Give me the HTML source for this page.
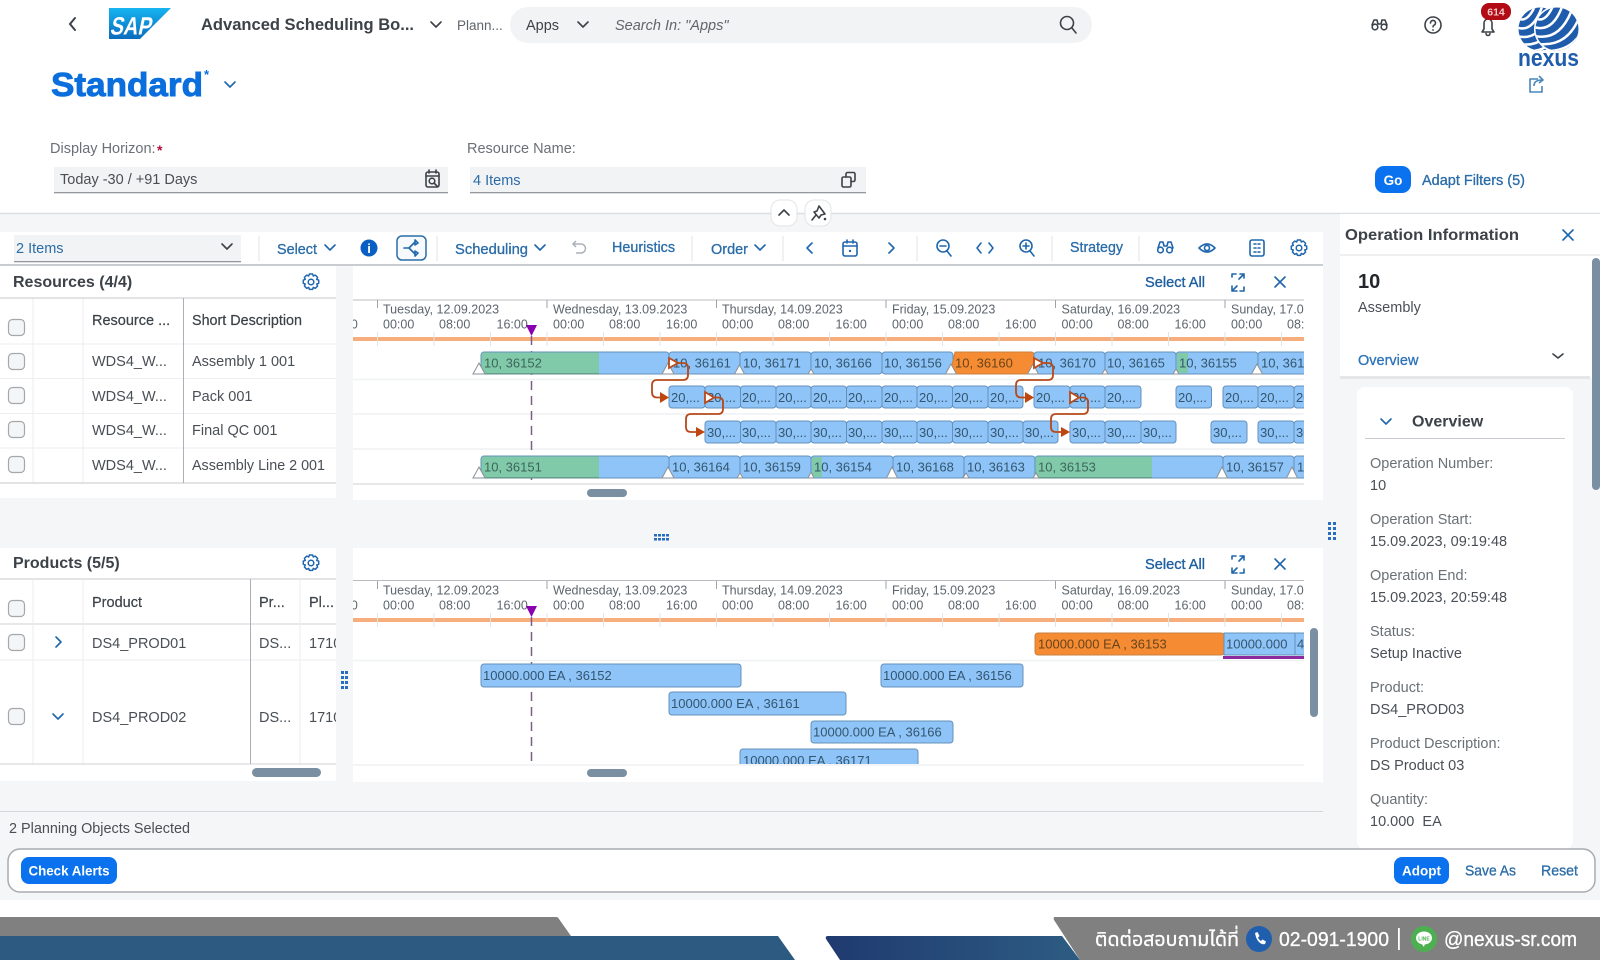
<!DOCTYPE html>
<html lang="en"><head><meta charset="utf-8"><title>Advanced Scheduling Board</title>
<style>
html,body{margin:0;padding:0;width:1600px;height:960px;overflow:hidden;background:#fff}
svg{display:block;filter:blur(.35px);font-family:"Liberation Sans","DejaVu Sans",sans-serif}
.t{font-size:14.5px;fill:#3c4248}
.g{font-size:14.5px;fill:#6a7076}
.v{font-size:14.5px;fill:#4a4f55}
.l{font-size:14.5px;fill:#2a6ca8}
.m{font-size:14.5px;fill:#2a6ca8;stroke:#2a6ca8;stroke-width:.3}
.lb{font-size:14.5px;fill:#1f5f9f;stroke:#1f5f9f;stroke-width:.35}
.h{font-size:16px;font-weight:bold;fill:#3c4248}
.d{font-size:12.5px;fill:#5d656c}
.b{fill:#8fc4f8;stroke:#6391bb;stroke-width:1}
.gr{fill:#80c9a9}
.bt{font-size:13px;fill:#33566f}
.bg{font-size:13px;fill:#3d665a}
.bo{font-size:13px;fill:#6a4318}
.wh{font-size:13.5px;fill:#fff;font-weight:bold}
.cb{fill:#f4f5f6;stroke:#a4a8ac;stroke-width:1.2}
.ic{fill:none;stroke:#1f66ad;stroke-width:1.6;stroke-linecap:round;stroke-linejoin:round}
.ik{fill:none;stroke:#3c4248;stroke-width:1.6;stroke-linecap:round;stroke-linejoin:round}
.tr{fill:#fff;stroke:#8a9096;stroke-width:1}
.sep{stroke:#e2e4e6;stroke-width:1}
.ar{fill:none;stroke:#b8491a;stroke-width:1.8}
.ah{fill:#c0460f}
.as{fill:#fff;stroke:#b8491a;stroke-width:1.8}
.ft{font-size:20px;fill:#fff;stroke:#fff;stroke-width:.3}
</style></head><body>
<svg width="1600" height="960" viewBox="0 0 1600 960" xmlns="http://www.w3.org/2000/svg">
<defs>
<clipPath id="c1"><rect x="353" y="296" width="951" height="190"/></clipPath>
<clipPath id="c2"><rect x="353" y="577" width="951" height="187"/></clipPath>
<clipPath id="c3"><rect x="0" y="579" width="336" height="186"/></clipPath>
<clipPath id="gc1"><circle cx="1540" cy="29" r="21.5"/></clipPath>
<clipPath id="gc2"><circle cx="1557" cy="29" r="21.5"/></clipPath>
<linearGradient id="sap" x1="0" y1="0" x2="0" y2="1"><stop offset="0" stop-color="#16b4f0"/><stop offset="1" stop-color="#0a6cbd"/></linearGradient>
<linearGradient id="nv" x1="0" y1="0" x2="1" y2="0"><stop offset="0" stop-color="#1f3a70"/><stop offset="1" stop-color="#2d5c82"/></linearGradient>
<symbol id="gear" viewBox="-9 -9 18 18" overflow="visible"><path d="M-1.6-8h3.2l.7 2 2-.9 2.3 2.3-.9 2 2 .7v3.2l-2 .7.9 2-2.3 2.3-2-.9-.7 2h-3.2l-.7-2-2 .9-2.3-2.3.9-2-2-.7v-3.2l2-.7-.9-2 2.3-2.3 2 .9z" fill="none" stroke="#1f66ad" stroke-width="1.5" stroke-linejoin="round"/><circle r="2.8" fill="none" stroke="#1f66ad" stroke-width="1.5"/></symbol>
</defs>

<!-- backgrounds -->
<rect x="0" y="214" width="1600" height="686" fill="#f5f6f7"/>
<line x1="0" y1="213.500" x2="1600" y2="213.500" stroke="#dcdfe1" stroke-width="1.500"/>
<rect x="0" y="232" width="1323" height="33" fill="#fff"/>
<rect x="0" y="264" width="1323" height="2" fill="#c9cdd1"/>
<rect x="0" y="266" width="336" height="232" fill="#fff"/>
<rect x="353" y="266" width="970" height="234" fill="#fff"/>
<rect x="0" y="548" width="336" height="233" fill="#fff"/>
<rect x="353" y="548" width="970" height="234" fill="#fff"/>
<rect x="1340" y="214" width="260" height="164" fill="#fff"/>
<rect x="1340" y="376" width="250" height="3" fill="#e4e6e8"/>
<rect x="1357" y="387" width="216" height="462" rx="8" fill="#fff"/>

<!-- shell bar -->
<path d="M75 18l-5 6 5 6" fill="none" stroke="#3c4248" stroke-width="2" stroke-linecap="round"/>
<path d="M109 8H171L140 39H109Z" fill="url(#sap)"/>
<text transform="translate(109.500 34.500) skewX(-12)" x="0" y="0" font-size="25" font-weight="bold" fill="#fff" textLength="41" lengthAdjust="spacingAndGlyphs">SAP</text>
<text x="201" y="30" font-size="17" font-weight="bold" fill="#3c4248" textLength="213" lengthAdjust="spacingAndGlyphs">Advanced Scheduling Bo...</text>
<path d="M431 22l5 5 5-5" class="ik" stroke-width="2"/>
<text x="457" y="30" font-size="13.5" fill="#5f656b">Plann...</text>
<rect x="510" y="7" width="582" height="36" rx="18" fill="#f2f3f4"/>
<text x="526" y="30" class="t" fill="#4a4f55">Apps</text>
<path d="M578 22l5 5 5-5" class="ik" stroke-width="2"/>
<text x="615" y="30" font-size="14.5" font-style="italic" fill="#5f656b">Search In: "Apps"</text>
<circle cx="1067" cy="23" r="6.500" class="ik"/><path d="M1072 28l4 5" class="ik"/>
<g class="ik" stroke-width="2"><circle cx="1375" cy="27" r="2.800"/><circle cx="1384" cy="27" r="2.800"/><path d="M1372 25l2-5h3l1 4h3l1-4h3l2 5"/></g>
<circle cx="1433" cy="25" r="8" class="ik"/><path d="M1430.500 23a2.500 2.500 0 1 1 3.500 2.200c-.7.4-1 .9-1 1.600" class="ik" stroke-width="1.400"/><circle cx="1433" cy="30" r=".9" fill="#3c4248"/>
<path d="M1482 32h12l-2-3v-6a4 4 0 0 0-8 0v6zM1486 33.500a2 2 0 0 0 4 0" class="ik"/>
<rect x="1481" y="3" width="30" height="17" rx="8" fill="#b30b15"/>
<text x="1496" y="15.500" font-size="10.500" font-weight="bold" fill="#f3c9cc" text-anchor="middle">614</text>

<!-- nexus logo -->
<circle cx="1540" cy="29" r="21.500" fill="#1f5cab"/>
<g clip-path="url(#gc1)" fill="none" stroke="#fff" stroke-width="2.500"><path d="M1517 18q10 6 18-12"/><path d="M1516 27q16 7 26-20"/><path d="M1517 36q22 6 33-24"/><path d="M1521 44q24 4 35-24"/><path d="M1530 51q20 0 30-20"/></g>
<circle cx="1557" cy="29" r="23" fill="#fff"/>
<circle cx="1557" cy="29" r="21.500" fill="#1f5cab"/>
<g clip-path="url(#gc2)" fill="none" stroke="#fff" stroke-width="2.500"><path d="M1535 18q10 6 18-12"/><path d="M1534 27q18 6 28-20"/><path d="M1535 36q24 5 36-24"/><path d="M1539 44q28 3 40-26"/><path d="M1550 51q22-1 32-20"/></g>
<text x="1518" y="66" font-size="24" font-weight="bold" fill="#1f5cab" textLength="61" lengthAdjust="spacingAndGlyphs">nexus</text>
<path d="M1538 79h-8v13h12v-6M1534 86c0-4 3-6 8-6M1539 76l4 4-4 3" fill="none" stroke="#4a86b8" stroke-width="1.600" stroke-linejoin="round"/>

<!-- title & filters -->
<text x="51" y="96" font-size="33" font-weight="bold" fill="#0a6fdc" stroke="#0a6fdc" stroke-width=".9" textLength="152" lengthAdjust="spacingAndGlyphs">Standard</text>
<text x="204" y="79" font-size="13" font-weight="bold" fill="#0a6fdc">*</text>
<path d="M225 82l5 5 5-5" class="ic"/>
<text x="50" y="153" class="g">Display Horizon:</text>
<text x="157" y="155" font-size="14" font-weight="bold" fill="#b0103a">*</text>
<text x="467" y="153" class="g">Resource Name:</text>
<rect x="54" y="167" width="394" height="25" fill="#f2f3f4"/><rect x="54" y="192" width="394" height="1.300" fill="#94989c"/>
<text x="60" y="184" class="v">Today -30 / +91 Days</text>
<g class="ik" stroke-width="1.400"><rect x="426" y="172" width="13" height="15" rx="2"/><path d="M426 176h13M429 170v3M436 170v3"/><circle cx="432" cy="181" r="2.800"/><path d="M434 183l3 3"/></g>
<rect x="470" y="167" width="396" height="25" fill="#f2f3f4"/><rect x="470" y="192" width="396" height="1.300" fill="#94989c"/>
<text x="473" y="185" class="l">4 Items</text>
<g class="ik" stroke-width="1.400"><rect x="842" y="177" width="9" height="10" rx="1.500"/><path d="M846 177v-3a1.500 1.500 0 0 1 1.500-1.500h6a1.500 1.500 0 0 1 1.500 1.500v6a1.500 1.500 0 0 1-1.500 1.500h-2.500"/></g>
<rect x="1375" y="166" width="36" height="27" rx="9" fill="#0a72ee"/>
<text x="1393" y="185" class="wh" text-anchor="middle" font-size="14.500">Go</text>
<text x="1422" y="185" class="m" textLength="103" lengthAdjust="spacingAndGlyphs">Adapt Filters (5)</text>

<rect x="771" y="200" width="26" height="26" rx="9" fill="#fff" stroke="#e2e4e6"/>
<path d="M779 215l5-5 5 5" class="ik" stroke-width="1.900"/>
<rect x="805" y="200" width="26" height="26" rx="9" fill="#fff" stroke="#e2e4e6"/>
<path d="M819 206l6 8-4 1-2 3-5-6 3-1zM812 220l4-5" class="ik" stroke-width="1.300"/><circle cx="825" cy="219" r="1.300" fill="#3c4248"/>

<!-- toolbar -->
<rect x="14" y="235" width="227" height="27" fill="#f2f3f4"/><rect x="14" y="261" width="227" height="1.300" fill="#94989c"/>
<text x="16" y="253" class="l">2 Items</text>
<path d="M222 244l5 5 5-5" class="ik" stroke-width="2"/>
<g class="sep"><line x1="259" y1="236" x2="259" y2="261"/><line x1="437" y1="236" x2="437" y2="261"/><line x1="692" y1="236" x2="692" y2="261"/><line x1="783" y1="236" x2="783" y2="261"/><line x1="917" y1="236" x2="917" y2="261"/><line x1="1052" y1="236" x2="1052" y2="261"/><line x1="1139" y1="236" x2="1139" y2="261"/></g>
<text x="277" y="254" class="m" textLength="40" lengthAdjust="spacingAndGlyphs">Select</text>
<path d="M325 245l5 5 5-5" class="ic"/>
<circle cx="369" cy="248" r="8.500" fill="#0a5fc4"/><text x="369" y="253" font-size="13" font-weight="bold" fill="#fff" text-anchor="middle">i</text>
<rect x="397" y="236" width="29" height="24" rx="5" fill="#f7fafd" stroke="#2a6ca8" stroke-width="1.500"/>
<path d="M404 248h5l6-6M409 248l6 6M415 240v5l3-2zM415 256v-5l3 2z" class="ic"/>
<text x="455" y="254" class="m" textLength="73" lengthAdjust="spacingAndGlyphs">Scheduling</text>
<path d="M535 245l5 5 5-5" class="ic"/>
<path d="M573 244h8a4 4 0 0 1 0 9h-5M576 241l-3 3 3 3" fill="none" stroke="#aab2b8" stroke-width="1.500"/>
<text x="612" y="252" class="m" textLength="63" lengthAdjust="spacingAndGlyphs">Heuristics</text>
<text x="711" y="254" class="m" textLength="37" lengthAdjust="spacingAndGlyphs">Order</text>
<path d="M755 245l5 5 5-5" class="ic"/>
<path d="M812 243l-5 5 5 5" class="ic"/>
<g class="ic"><rect x="843" y="242" width="14" height="14" rx="2"/><path d="M843 246h14M847 240v3M853 240v3"/></g><circle cx="850" cy="251" r="1.200" fill="#1f66ad"/>
<path d="M889 243l5 5-5 5" class="ic"/>
<g class="ic"><circle cx="943" cy="246" r="6"/><path d="M947 251l4 5M940 246h6"/></g>
<path d="M981 243l-4 5 4 5M989 243l4 5-4 5" class="ic"/>
<g class="ic"><circle cx="1026" cy="246" r="6"/><path d="M1030 251l4 5M1023 246h6M1026 243v6"/></g>
<text x="1070" y="252" class="m" textLength="53" lengthAdjust="spacingAndGlyphs">Strategy</text>
<g class="ic" stroke-width="2"><circle cx="1160.500" cy="250" r="2.800"/><circle cx="1169.500" cy="250" r="2.800"/><path d="M1158 248l2-6h3l1 4h3l1-4h3l2 6"/></g>
<g class="ic"><path d="M1199 248q8-8 16 0-8 8-16 0z"/><circle cx="1207" cy="248" r="2.500"/></g>
<g class="ic"><rect x="1250" y="240" width="14" height="16" rx="2"/><path d="M1254 244h2M1258 244h2M1254 248h2M1258 248h2M1254 252h2M1258 252h2"/></g>
<use href="#gear" x="1290" y="239" width="18" height="18"/>

<!-- Resources table -->
<text x="13" y="287" class="h">Resources (4/4)</text>
<use href="#gear" x="302" y="273" width="18" height="18"/>
<g stroke="#eceef0" stroke-width="1"><line x1="0" y1="344" x2="336" y2="344"/><line x1="0" y1="378.500" x2="336" y2="378.500"/><line x1="0" y1="413.500" x2="336" y2="413.500"/><line x1="0" y1="448" x2="336" y2="448"/><line x1="33" y1="298" x2="33" y2="483"/><line x1="83" y1="298" x2="83" y2="483"/></g>
<line x1="0" y1="298" x2="336" y2="298" stroke="#cfd2d5" stroke-width="1.200"/><line x1="0" y1="483" x2="336" y2="483" stroke="#cfd2d5" stroke-width="1.200"/>
<line x1="183.500" y1="298" x2="183.500" y2="483" stroke="#aab0b5"/>
<rect class="cb" x="8.500" y="319.500" width="16" height="16" rx="4"/><rect class="cb" x="8.500" y="353.500" width="16" height="16" rx="4"/><rect class="cb" x="8.500" y="387.500" width="16" height="16" rx="4"/><rect class="cb" x="8.500" y="421.500" width="16" height="16" rx="4"/><rect class="cb" x="8.500" y="456.500" width="16" height="16" rx="4"/>
<text x="92" y="325" class="t" style="stroke:#3c4248;stroke-width:.2">Resource ...</text>
<text x="192" y="325" class="t" textLength="110" lengthAdjust="spacingAndGlyphs" style="stroke:#3c4248;stroke-width:.2">Short Description</text>
<text x="92" y="366" class="v">WDS4_W...</text><text x="192" y="366" class="v">Assembly 1 001</text>
<text x="92" y="401" class="v">WDS4_W...</text><text x="192" y="401" class="v">Pack 001</text>
<text x="92" y="435" class="v">WDS4_W...</text><text x="192" y="435" class="v">Final QC 001</text>
<text x="92" y="470" class="v">WDS4_W...</text><text x="192" y="470" class="v" textLength="133" lengthAdjust="spacingAndGlyphs">Assembly Line 2 001</text>

<!-- Top gantt -->
<text x="1145" y="287" class="lb" textLength="60" lengthAdjust="spacingAndGlyphs">Select All</text>
<path d="M1232 277v-3h4M1240 291h4v-4M1239 279l5-5M1244 278v-4h-4M1232 286v5h5M1232 291l5-5" class="ic"/>
<path d="M1275 277l10 10M1285 277l-10 10" class="ic" stroke-width="1.800"/>
<line x1="353" y1="300" x2="1304" y2="300" stroke="#b8bcc0"/>
<g clip-path="url(#c1)">
<g stroke="#9ea3a8"><path d="M377.500 300v8M547 300v8M716.500 300v8M886 300v8M1055.500 300v8M1225 300v8"/></g>
<g class="d">
<text x="326.500" y="328.500">16:00</text>
<text x="383" y="313.500">Tuesday, 12.09.2023</text><text x="383" y="328.500">00:00</text><text x="439" y="328.500">08:00</text><text x="496.500" y="328.500">16:00</text>
<text x="553" y="313.500">Wednesday, 13.09.2023</text><text x="553" y="328.500">00:00</text><text x="609" y="328.500">08:00</text><text x="666" y="328.500">16:00</text>
<text x="722" y="313.500">Thursday, 14.09.2023</text><text x="722" y="328.500">00:00</text><text x="778" y="328.500">08:00</text><text x="835.500" y="328.500">16:00</text>
<text x="892" y="313.500">Friday, 15.09.2023</text><text x="892" y="328.500">00:00</text><text x="948" y="328.500">08:00</text><text x="1005" y="328.500">16:00</text>
<text x="1061.500" y="313.500">Saturday, 16.09.2023</text><text x="1061.500" y="328.500">00:00</text><text x="1117.500" y="328.500">08:00</text><text x="1174.500" y="328.500">16:00</text>
<text x="1231" y="313.500">Sunday, 17.09.2023</text><text x="1231" y="328.500">00:00</text><text x="1287" y="328.500">08:00</text>
</g>
<rect x="353" y="337" width="951" height="4" fill="#f5ae7c"/>
<g stroke="#e2e4e6"><path d="M377.500 332v14M434 332v14M490.500 332v14M547 332v14M603.500 332v14M660 332v14M716.500 332v14M773 332v14M829.500 332v14M886 332v14M942.500 332v14M999 332v14M1055.500 332v14M1112 332v14M1168.500 332v14M1225 332v14M1281.500 332v14"/></g>
<g stroke="#eff1f2" stroke-width="1.500"><line x1="353" y1="379.500" x2="1304" y2="379.500"/><line x1="353" y1="414" x2="1304" y2="414"/><line x1="353" y1="449" x2="1304" y2="449"/></g>
<line x1="353" y1="484" x2="1304" y2="484" stroke="#dfe1e3" stroke-width="1.500"/>
<line x1="531.500" y1="336" x2="531.500" y2="482" stroke="#7a5f85" stroke-width="1.500" stroke-dasharray="9 6"/>
<path d="M526 325H537L531.500 336Z" fill="#8a00b0"/>

<!-- row 1 -->
<rect class="b" x="481" y="352" width="188" height="22" rx="3"/><path d="M484 352.500H599V373.500H484Q481.500 373.500 481.500 371V355Q481.500 352.500 484 352.500Z" class="gr"/><line x1="481.500" y1="373.800" x2="599" y2="373.800" stroke="#5d8f80"/>
<text x="484" y="367.500" class="bg">10, 36152</text>
<rect class="b" x="669" y="352" width="71" height="22" rx="3"/><text x="673" y="367.500" class="bt">10, 36161</text>
<rect class="b" x="740" y="352" width="71" height="22" rx="3"/><text x="743" y="367.500" class="bt">10, 36171</text>
<rect class="b" x="811" y="352" width="71" height="22" rx="3"/><text x="814" y="367.500" class="bt">10, 36166</text>
<rect class="b" x="882" y="352" width="71" height="22" rx="3"/><text x="884" y="367.500" class="bt">10, 36156</text>
<path d="M955 352H1031Q1034 352 1034 355V374H950Z" fill="#f58c34" stroke="#c9803f"/><text x="955" y="367.500" class="bo">10, 36160</text>
<rect class="b" x="1034" y="352" width="71" height="22" rx="3"/><text x="1038" y="367.500" class="bt">10, 36170</text>
<rect class="b" x="1105" y="352" width="71" height="22" rx="3"/><text x="1107" y="367.500" class="bt">10, 36165</text>
<rect class="b" x="1176" y="352" width="82" height="22" rx="3"/><rect class="gr" x="1177" y="353" width="11" height="20"/><text x="1179" y="367.500" class="bt">10, 36155</text>
<rect class="b" x="1258" y="352" width="60" height="22" rx="3"/><text x="1261" y="367.500" class="bt">10, 36157</text>
<!-- row 2 -->
<g class="b"><rect x="669" y="386" width="36" height="22" rx="3"/><rect x="705" y="386" width="35.500" height="22" rx="3"/><rect x="740.500" y="386" width="35.500" height="22" rx="3"/><rect x="776" y="386" width="35" height="22" rx="3"/><rect x="811" y="386" width="35.500" height="22" rx="3"/><rect x="846.500" y="386" width="35.500" height="22" rx="3"/><rect x="882" y="386" width="35" height="22" rx="3"/><rect x="917" y="386" width="35.500" height="22" rx="3"/><rect x="952.500" y="386" width="35.500" height="22" rx="3"/><rect x="988" y="386" width="35" height="22" rx="3"/><rect x="1034" y="386" width="36" height="22" rx="3"/><rect x="1070" y="386" width="35" height="22" rx="3"/><rect x="1105" y="386" width="36" height="22" rx="3"/><rect x="1176" y="386" width="35.500" height="22" rx="3"/><rect x="1223" y="386" width="35" height="22" rx="3"/><rect x="1258" y="386" width="36" height="22" rx="3"/><rect x="1294" y="386" width="20" height="22" rx="3"/></g>
<g class="bt"><text x="671" y="402">20,...</text><text x="707" y="402">20,...</text><text x="742" y="402">20,...</text><text x="778" y="402">20,...</text><text x="813" y="402">20,...</text><text x="848" y="402">20,...</text><text x="884" y="402">20,...</text><text x="919" y="402">20,...</text><text x="954" y="402">20,...</text><text x="990" y="402">20,...</text><text x="1036" y="402">20,...</text><text x="1072" y="402">20,...</text><text x="1107" y="402">20,...</text><text x="1178" y="402">20,...</text><text x="1225" y="402">20,...</text><text x="1260" y="402">20,...</text><text x="1296" y="402">20,...</text></g>
<!-- row 3 -->
<g class="b"><rect x="705" y="421" width="35.500" height="22" rx="3"/><rect x="740.500" y="421" width="35.500" height="22" rx="3"/><rect x="776" y="421" width="35" height="22" rx="3"/><rect x="811" y="421" width="35.500" height="22" rx="3"/><rect x="846.500" y="421" width="35.500" height="22" rx="3"/><rect x="882" y="421" width="35" height="22" rx="3"/><rect x="917" y="421" width="35.500" height="22" rx="3"/><rect x="952.500" y="421" width="35.500" height="22" rx="3"/><rect x="988" y="421" width="35" height="22" rx="3"/><rect x="1023" y="421" width="35" height="22" rx="3"/><rect x="1070" y="421" width="35" height="22" rx="3"/><rect x="1105" y="421" width="36" height="22" rx="3"/><rect x="1141" y="421" width="35" height="22" rx="3"/><rect x="1211" y="421" width="36" height="22" rx="3"/><rect x="1258" y="421" width="36" height="22" rx="3"/><rect x="1294" y="421" width="20" height="22" rx="3"/></g>
<g class="bt"><text x="707" y="437">30,...</text><text x="742" y="437">30,...</text><text x="778" y="437">30,...</text><text x="813" y="437">30,...</text><text x="848" y="437">30,...</text><text x="884" y="437">30,...</text><text x="919" y="437">30,...</text><text x="954" y="437">30,...</text><text x="990" y="437">30,...</text><text x="1025" y="437">30,...</text><text x="1072" y="437">30,...</text><text x="1107" y="437">30,...</text><text x="1143" y="437">30,...</text><text x="1213" y="437">30,...</text><text x="1260" y="437">30,...</text><text x="1296" y="437">30,...</text></g>
<!-- row 4 -->
<rect class="b" x="481" y="456" width="188" height="22" rx="3"/><path d="M484 456.500H599V477.500H484Q481.500 477.500 481.500 475V459Q481.500 456.500 484 456.500Z" class="gr"/><line x1="481.500" y1="477.800" x2="599" y2="477.800" stroke="#5d8f80"/>
<text x="484" y="471.500" class="bg">10, 36151</text>
<rect class="b" x="669" y="456" width="71" height="22" rx="3"/><text x="672" y="471.500" class="bt">10, 36164</text>
<rect class="b" x="740" y="456" width="71" height="22" rx="3"/><text x="743" y="471.500" class="bt">10, 36159</text>
<rect class="b" x="811" y="456" width="82" height="22" rx="3"/><rect class="gr" x="812" y="457" width="10" height="20"/><text x="814" y="471.500" class="bt">10, 36154</text>
<rect class="b" x="893" y="456" width="71" height="22" rx="3"/><text x="896" y="471.500" class="bt">10, 36168</text>
<rect class="b" x="964" y="456" width="71" height="22" rx="3"/><text x="967" y="471.500" class="bt">10, 36163</text>
<rect class="b" x="1035" y="456" width="188" height="22" rx="3"/><path d="M1037 456.500H1152V477.500H1037Q1035.500 477.500 1035.500 475V459Q1035.500 456.500 1037 456.500Z" class="gr"/><line x1="1035.500" y1="477.800" x2="1152" y2="477.800" stroke="#5d8f80"/>
<text x="1038" y="471.500" class="bg">10, 36153</text>
<rect class="b" x="1223" y="456" width="71" height="22" rx="3"/><text x="1226" y="471.500" class="bt">10, 36157</text>
<rect class="b" x="1294" y="456" width="20" height="22" rx="3"/><text x="1297" y="471.500" class="bt">10, 36158</text>
<!-- milestones -->
<g class="tr"><path d="M479 363l6 11h-12z"/><path d="M668 363l6 11h-12z"/><path d="M739.500 365l5 9h-10z"/><path d="M811 369l3 5h-6z"/><path d="M951 364l5.500 10h-11z"/><path d="M1033 364l5.500 10h-11z"/><path d="M1105 369l3 5h-6z"/><path d="M1176 369l3 5h-6z"/><path d="M1257 364l5.500 10h-11z"/>
<path d="M479 467l6 11h-12z"/><path d="M668 467l6 11h-12z"/><path d="M740 473l3 5h-6z"/><path d="M811 472l3 6h-6z"/><path d="M892 467l5.500 11h-11z"/><path d="M966 473l3 5h-6z"/><path d="M1036 473l3 5h-6z"/><path d="M1222 467l5.500 11h-11z"/><path d="M1292 467l5.500 11h-11z"/></g>
<!-- arrows -->
<path class="ar" d="M676 363H683Q688 363 688 368V375Q688 380 683 380H657Q652 380 652 385V392Q652 397.500 657 397.500H661"/>
<path class="ah" d="M660 392L669 397.500L660 403Z"/><path class="as" d="M669 358L678 363L669 368Z"/>
<path class="ar" d="M714 397.500H718Q723 397.500 723 402V409Q723 414 718 414H691Q686 414 686 419V427Q686 432 691 432H697"/>
<path class="ah" d="M696 427L705 432L696 437Z"/><path class="as" d="M705 392L714 397.500L705 403Z"/>
<path class="ar" d="M1043 363H1048Q1053 363 1053 368V375Q1053 380 1048 380H1021Q1016 380 1016 385V392Q1016 397.500 1021 397.500H1026"/>
<path class="ah" d="M1025 392L1034 397.500L1025 403Z"/><path class="as" d="M1034 358L1043 363L1034 368Z"/>
<path class="ar" d="M1079 397.500H1083Q1088 397.500 1088 402V409Q1088 414 1083 414H1056Q1051 414 1051 419V427Q1051 432 1056 432H1062"/>
<path class="ah" d="M1061 427L1070 432L1061 437Z"/><path class="as" d="M1070 392L1079 397.500L1070 403Z"/>
</g>
<rect x="587" y="489" width="40" height="8" rx="4" fill="#7b8fa3"/>

<!-- resizers -->
<g fill="#2a6cc0"><rect x="654" y="534" width="3" height="2.500"/><rect x="658" y="534" width="3" height="2.500"/><rect x="662" y="534" width="3" height="2.500"/><rect x="666" y="534" width="3" height="2.500"/><rect x="654" y="538" width="3" height="2.500"/><rect x="658" y="538" width="3" height="2.500"/><rect x="662" y="538" width="3" height="2.500"/><rect x="666" y="538" width="3" height="2.500"/>
<rect x="1328" y="522" width="3" height="3"/><rect x="1333" y="522" width="3" height="3"/><rect x="1328" y="527" width="3" height="3"/><rect x="1333" y="527" width="3" height="3"/><rect x="1328" y="532" width="3" height="3"/><rect x="1333" y="532" width="3" height="3"/><rect x="1328" y="537" width="3" height="3"/><rect x="1333" y="537" width="3" height="3"/>
<rect x="341" y="671" width="3" height="3"/><rect x="345" y="671" width="3" height="3"/><rect x="341" y="676" width="3" height="3"/><rect x="345" y="676" width="3" height="3"/><rect x="341" y="681" width="3" height="3"/><rect x="345" y="681" width="3" height="3"/><rect x="341" y="686" width="3" height="3"/><rect x="345" y="686" width="3" height="3"/></g>

<!-- Products table -->
<text x="13" y="568" class="h">Products (5/5)</text>
<use href="#gear" x="302" y="554" width="18" height="18"/>
<line x1="0" y1="579" x2="336" y2="579" stroke="#cfd2d5" stroke-width="1.200"/>
<g stroke="#eceef0"><line x1="0" y1="624" x2="336" y2="624" stroke="#d6d9dc" stroke-width="1.200"/><line x1="0" y1="660" x2="336" y2="660"/><line x1="33" y1="579" x2="33" y2="764"/><line x1="83" y1="579" x2="83" y2="764"/><line x1="300" y1="579" x2="300" y2="764"/></g>
<line x1="0" y1="764" x2="336" y2="764" stroke="#d6d9dc" stroke-width="1.200"/>
<line x1="250.500" y1="579" x2="250.500" y2="764" stroke="#aab0b5"/>
<rect class="cb" x="8.500" y="600.500" width="16" height="16" rx="4"/><rect class="cb" x="8.500" y="634.500" width="16" height="16" rx="4"/><rect class="cb" x="8.500" y="708.500" width="16" height="16" rx="4"/>
<text x="92" y="607" class="t" style="stroke:#3c4248;stroke-width:.2">Product</text>
<text x="259" y="607" class="t" style="stroke:#3c4248;stroke-width:.2">Pr...</text>
<text x="309" y="607" class="t" style="stroke:#3c4248;stroke-width:.2">Pl...</text>
<path d="M56 637l5 5-5 5" class="ic" stroke-width="2"/>
<path d="M53 714l5 5 5-5" class="ic" stroke-width="2"/>
<g clip-path="url(#c3)">
<text x="92" y="648" class="v">DS4_PROD01</text><text x="259" y="648" class="v">DS...</text><text x="309" y="648" class="v">1710</text>
<text x="92" y="722" class="v">DS4_PROD02</text><text x="259" y="722" class="v">DS...</text><text x="309" y="722" class="v">1710</text>
</g>
<rect x="252" y="768" width="69" height="9" rx="4.500" fill="#7b8fa3"/>

<!-- Bottom gantt -->
<text x="1145" y="569" class="lb" textLength="60" lengthAdjust="spacingAndGlyphs">Select All</text>
<path d="M1232 559v-3h4M1240 573h4v-4M1239 561l5-5M1244 560v-4h-4M1232 568v5h5M1232 573l5-5" class="ic"/>
<path d="M1275 559l10 10M1285 559l-10 10" class="ic" stroke-width="1.800"/>
<line x1="353" y1="580.500" x2="1304" y2="580.500" stroke="#b8bcc0"/>
<g clip-path="url(#c2)">
<g stroke="#9ea3a8"><path d="M377.500 581v8M547 581v8M716.500 581v8M886 581v8M1055.500 581v8M1225 581v8"/></g>
<g class="d">
<text x="326.500" y="609.500">16:00</text>
<text x="383" y="594.500">Tuesday, 12.09.2023</text><text x="383" y="609.500">00:00</text><text x="439" y="609.500">08:00</text><text x="496.500" y="609.500">16:00</text>
<text x="553" y="594.500">Wednesday, 13.09.2023</text><text x="553" y="609.500">00:00</text><text x="609" y="609.500">08:00</text><text x="666" y="609.500">16:00</text>
<text x="722" y="594.500">Thursday, 14.09.2023</text><text x="722" y="609.500">00:00</text><text x="778" y="609.500">08:00</text><text x="835.500" y="609.500">16:00</text>
<text x="892" y="594.500">Friday, 15.09.2023</text><text x="892" y="609.500">00:00</text><text x="948" y="609.500">08:00</text><text x="1005" y="609.500">16:00</text>
<text x="1061.500" y="594.500">Saturday, 16.09.2023</text><text x="1061.500" y="609.500">00:00</text><text x="1117.500" y="609.500">08:00</text><text x="1174.500" y="609.500">16:00</text>
<text x="1231" y="594.500">Sunday, 17.09.2023</text><text x="1231" y="609.500">00:00</text><text x="1287" y="609.500">08:00</text>
</g>
<rect x="353" y="618" width="951" height="4" fill="#f5ae7c"/>
<g stroke="#e2e4e6"><path d="M377.500 613v14M434 613v14M490.500 613v14M547 613v14M603.500 613v14M660 613v14M716.500 613v14M773 613v14M829.500 613v14M886 613v14M942.500 613v14M999 613v14M1055.500 613v14M1112 613v14M1168.500 613v14M1225 613v14M1281.500 613v14"/></g>
<line x1="353" y1="660.500" x2="1304" y2="660.500" stroke="#eff1f2" stroke-width="1.500"/>
<line x1="531.500" y1="617" x2="531.500" y2="764" stroke="#7a5f85" stroke-width="1.500" stroke-dasharray="9 6"/>
<path d="M526 606H537L531.500 617Z" fill="#8a00b0"/>
<rect x="1035" y="633" width="189" height="22" rx="3" fill="#f58c34" stroke="#c9803f"/><text x="1038" y="648.500" class="bo">10000.000 EA , 36153</text>
<rect class="b" x="1224" y="633" width="71" height="22"/><text x="1226" y="648.500" class="bt">10000.000</text>
<rect class="b" x="1295" y="633" width="25" height="22"/><text x="1297" y="648.500" class="bt">4</text>
<rect x="1223" y="656" width="81" height="3" fill="#8e2aa0"/>
<rect class="b" x="481" y="664" width="260" height="23" rx="3"/><text x="483" y="680" class="bt">10000.000 EA , 36152</text>
<rect class="b" x="881" y="664" width="142" height="23" rx="3"/><text x="883" y="680" class="bt">10000.000 EA , 36156</text>
<rect class="b" x="669" y="692" width="177" height="23" rx="3"/><text x="671" y="708" class="bt">10000.000 EA , 36161</text>
<rect class="b" x="811" y="721" width="142" height="22" rx="3"/><text x="813" y="736.500" class="bt">10000.000 EA , 36166</text>
<rect class="b" x="740" y="749" width="178" height="24" rx="3"/><text x="743" y="765" class="bt">10000.000 EA , 36171</text>
</g>
<line x1="353" y1="765" x2="1304" y2="765" stroke="#eceef0" stroke-width="1.200"/>
<rect x="587" y="769" width="40" height="8" rx="4" fill="#7b8fa3"/>
<rect x="1310" y="628" width="8" height="89" rx="4" fill="#7b8fa3"/>

<!-- Right panel -->
<text x="1345" y="240" class="h" textLength="174" lengthAdjust="spacingAndGlyphs">Operation Information</text>
<path d="M1563 230l10 10M1573 230l-10 10" class="ic" stroke-width="1.800"/>
<line x1="1340" y1="255" x2="1600" y2="255" stroke="#dfe1e3"/>
<rect x="1592" y="258" width="8" height="232" rx="4" fill="#7b8fa3"/>
<text x="1358" y="288" font-size="20" font-weight="bold" fill="#24282c">10</text>
<text x="1358" y="312" class="v">Assembly</text>
<text x="1358" y="365" class="m" style="fill:#2d73b8;stroke:#2d73b8">Overview</text>
<path d="M1553 354l5 4 5-4" class="ik" stroke-width="2"/>
<path d="M1381 419l5 5 5-5" class="ic" stroke-width="1.800"/>
<text x="1412" y="426.500" class="h">Overview</text>
<line x1="1365" y1="438.500" x2="1565" y2="438.500" stroke="#c9cdd1"/>
<text x="1370" y="468" class="g">Operation Number:</text><text x="1370" y="490" class="v">10</text>
<text x="1370" y="524" class="g">Operation Start:</text><text x="1370" y="546" class="v">15.09.2023, 09:19:48</text>
<text x="1370" y="580" class="g">Operation End:</text><text x="1370" y="602" class="v">15.09.2023, 20:59:48</text>
<text x="1370" y="636" class="g">Status:</text><text x="1370" y="658" class="v">Setup Inactive</text>
<text x="1370" y="692" class="g">Product:</text><text x="1370" y="714" class="v">DS4_PROD03</text>
<text x="1370" y="748" class="g">Product Description:</text><text x="1370" y="770" class="v">DS Product 03</text>
<text x="1370" y="804" class="g">Quantity:</text><text x="1370" y="826" class="v">10.000&#160; EA</text>

<!-- status + footer -->
<line x1="0" y1="811.500" x2="1323" y2="811.500" stroke="#d4d7da"/>
<text x="9" y="833" class="v" textLength="181" lengthAdjust="spacingAndGlyphs">2 Planning Objects Selected</text>
<rect x="8" y="849" width="1587" height="43" rx="12" fill="#fff" stroke="#a8acb0" stroke-width="1.500"/>
<rect x="21" y="857" width="96" height="27" rx="8" fill="#0a72ee"/>
<text x="69" y="875.500" class="wh" text-anchor="middle" textLength="81" lengthAdjust="spacingAndGlyphs">Check Alerts</text>
<rect x="1394" y="857" width="55" height="27" rx="8" fill="#0a72ee"/>
<text x="1421.500" y="875.500" class="wh" text-anchor="middle">Adopt</text>
<text x="1465" y="875.500" class="m" textLength="51" lengthAdjust="spacingAndGlyphs">Save As</text>
<text x="1541" y="875.500" class="m" textLength="37" lengthAdjust="spacingAndGlyphs">Reset</text>

<!-- banner -->
<path d="M0 917H556Q558 917 559 919L571 936H0Z" fill="#808080"/>
<path d="M0 936H778L795 960H0Z" fill="#2c5a80"/>
<path d="M828 936H1062L1080 960H840L826 939Q825 936 828 936Z" fill="url(#nv)"/>
<path d="M1055 917H1600V960H1080L1054 920Q1053 917 1055 917Z" fill="#808080"/>
<text x="1095" y="946" class="ft" font-family="'Liberation Sans','Noto Sans Thai','DejaVu Sans',sans-serif" textLength="144" lengthAdjust="spacingAndGlyphs">ติดต่อสอบถามได้ที่</text>
<circle cx="1259" cy="939" r="13" fill="#1f5fad"/>
<path d="M1255 933l2.500-1 2 4-1.500 1.500q1 2.500 3 3.500l1.500-1.500 3.500 2-1 2.500q-3 1-6-2t-4-9z" fill="#fff"/>
<text x="1279" y="946" class="ft" textLength="110" lengthAdjust="spacingAndGlyphs">02-091-1900</text>
<rect x="1398" y="928" width="1.800" height="22" fill="#fff"/>
<circle cx="1424" cy="939" r="13" fill="#4cb050"/>
<ellipse cx="1424" cy="938" rx="8" ry="6.500" fill="#fff"/>
<path d="M1421 943l3 4 1-4z" fill="#fff"/>
<text x="1424" y="940.500" font-size="5" font-weight="bold" fill="#4cb050" text-anchor="middle">LINE</text>
<text x="1444" y="946" class="ft" textLength="133" lengthAdjust="spacingAndGlyphs">@nexus-sr.com</text>
</svg>
</body></html>
